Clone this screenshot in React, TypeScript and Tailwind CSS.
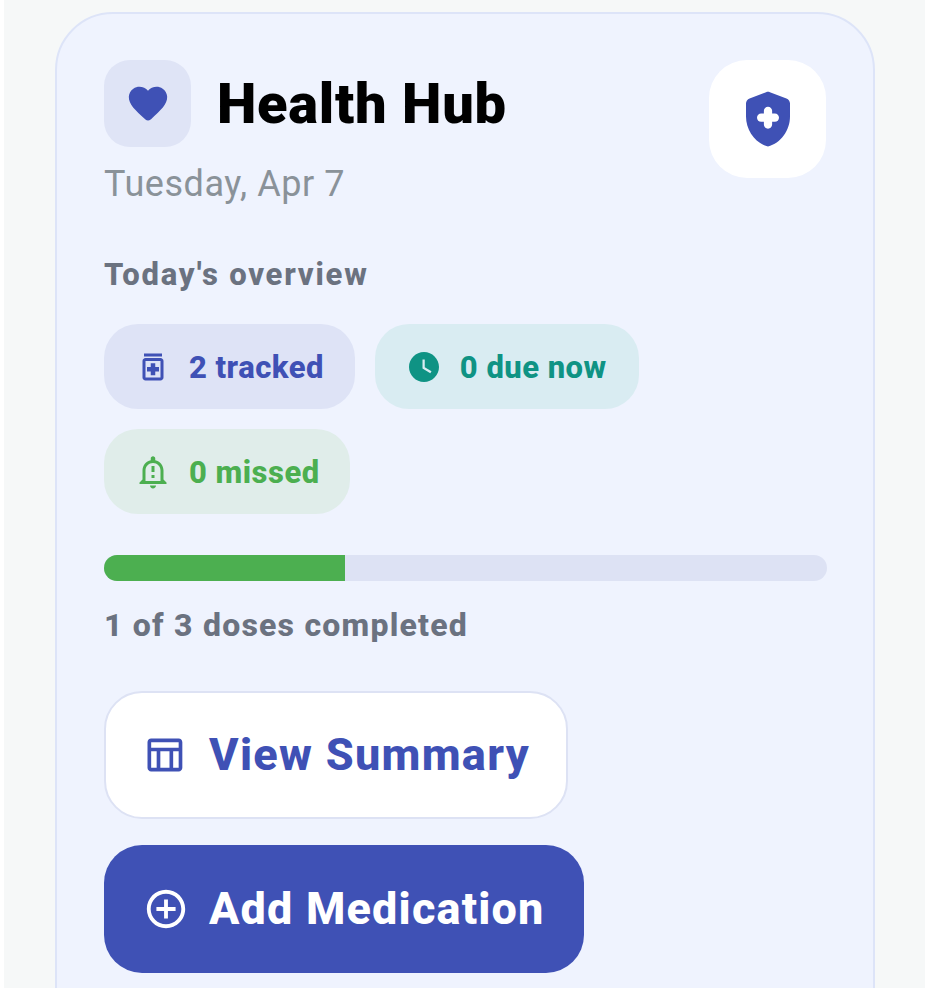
import React from "react";
import {
  MdOutlineMedication,
  MdWatchLater,
  MdOutlineNotificationImportant,
  MdOutlineTableChart,
  MdAddCircleOutline,
} from "react-icons/md";

function Heart() {
  return (
    <svg viewBox="0 0 24 24" className="w-[46px] h-[46px]" fill="#3f51b5">
      <path d="M13.35 20.13c-.76.69-1.93.69-2.69-.01l-.11-.1C5.3 15.27 1.87 12.16 2 8.28c.06-1.7.93-3.33 2.34-4.29 2.64-1.8 5.9-.96 7.66 1.1 1.76-2.06 5.02-2.91 7.66-1.1 1.41.96 2.28 2.59 2.34 4.29.14 3.88-3.3 6.99-8.55 11.76l-.1.09z" />
    </svg>
  );
}

function Shield() {
  return (
    <svg viewBox="0 0 24 24" className="w-[66px] h-[66px]" fill="#3f51b5">
      <path
        fillRule="evenodd"
        d="M11.3 2.26l-6 2.25C4.52 4.81 4 5.55 4 6.39v4.71c0 5.05 3.41 9.76 8 10.9 4.59-1.14 8-5.85 8-10.9V6.39c0-.83-.52-1.58-1.3-1.87l-6-2.25c-.45-.18-.95-.18-1.4-.01zM10.5 13h-1c-.83 0-1.5-.67-1.5-1.5S8.67 10 9.5 10h1V9c0-.83.67-1.5 1.5-1.5s1.5.67 1.5 1.5v1h1c.83 0 1.5.67 1.5 1.5S15.33 13 14.5 13h-1v1c0 .83-.67 1.5-1.5 1.5s-1.5-.67-1.5-1.5v-1z"
      />
    </svg>
  );
}

function Chip({
  icon,
  label,
  bg,
  color,
  pr,
}: {
  icon: React.ReactNode;
  label: string;
  bg: string;
  color: string;
  pr: string;
}) {
  return (
    <div className={`flex items-center h-[85px] rounded-[34px] pl-[31px] ${bg} ${color} ${pr}`}>
      <span className="flex w-[36px] h-[36px] items-center justify-center">{icon}</span>
      <span className="ml-[18px] pt-[2px] text-[31px] leading-none font-extrabold tracking-[0.47px]">{label}</span>
    </div>
  );
}

export default function App() {
  return (
    <div className="w-[925px] h-[1000px] bg-white overflow-hidden" style={{ fontFamily: "Roboto, sans-serif" }}>
      <div className="ml-[4px] h-[988px] overflow-hidden bg-[#f6f8f8] pt-[12px] pl-[51px] pr-[50px]">
        <div className="h-[1100px] rounded-[58px] border-2 border-[#dde4f8] bg-[#eff3fe] pt-[46px] pl-[47px] pr-[47px]">
          <div className="flex justify-between">
            <div>
              <div className="flex items-center">
                <div className="flex w-[87px] h-[87px] items-center justify-center rounded-[26px] bg-[#dfe4f6]">
                  <Heart />
                </div>
                <h1 className="ml-[26px] text-[56px] leading-none font-black tracking-[0.75px] text-black">Health Hub</h1>
              </div>
              <p className="mt-[15px] text-[36px] leading-[44px] font-normal tracking-[0.57px] text-[#8a9299]">Tuesday, Apr 7</p>
            </div>
            <div className="flex w-[117px] h-[118px] items-center justify-center rounded-[38px] bg-white">
              <Shield />
            </div>
          </div>

          <p className="mt-[49px] text-[31px] leading-[40px] font-extrabold tracking-[1.78px] text-[#6b7280]">Today's overview</p>

          <div className="mt-[29px] flex flex-wrap gap-[20px] w-[722px]">
            <Chip
              icon={<MdOutlineMedication size={36} />}
              label="2 tracked"
              bg="bg-[#dee3f6]"
              color="text-[#3f51b5]"
              pr="pr-[31px]"
            />
            <Chip
              icon={<MdWatchLater size={40} />}
              label="0 due now"
              bg="bg-[#d9ecf2]"
              color="text-[#0f9384]"
              pr="pr-[32px]"
            />
            <Chip
              icon={<MdOutlineNotificationImportant size={40} />}
              label="0 missed"
              bg="bg-[#e0edea]"
              color="text-[#4caf50]"
              pr="pr-[30px]"
            />
          </div>

          <div className="mt-[41px] h-[26px] w-[723px] rounded-full bg-[#dde2f4] overflow-hidden">
            <div className="h-full bg-[#4caf50]" style={{ width: "33.33%" }} />
          </div>

          <p className="mt-[24px] text-[32px] leading-[40px] font-extrabold tracking-[1.22px] text-[#6b7280]">1 of 3 doses completed</p>

          <div className="mt-[46px] flex flex-col items-start gap-[26px]">
            <button className="flex items-center h-[128px] rounded-[38px] border-2 border-[#dde2f4] bg-white pl-[36px] pr-[36px] text-[#3f51b5]">
              <MdOutlineTableChart size={44} />
              <span className="ml-[23px] mb-[2px] text-[45px] leading-none font-extrabold tracking-[1.3px]">View Summary</span>
            </button>
            <button className="flex items-center h-[128px] rounded-[38px] bg-[#3f51b5] pl-[39px] pr-[39px] text-white">
              <MdAddCircleOutline size={46} />
              <span className="ml-[20px] mb-[2px] text-[45px] leading-none font-extrabold tracking-[1.17px]">Add Medication</span>
            </button>
          </div>
        </div>
      </div>
    </div>
  );
}
